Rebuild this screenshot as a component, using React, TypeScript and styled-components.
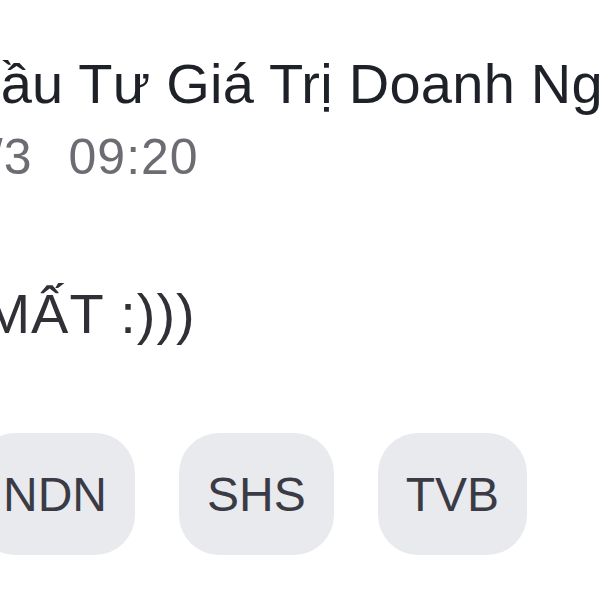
import styled, { createGlobalStyle } from 'styled-components';

const GlobalStyle = createGlobalStyle`
  html, body {
    margin: 0;
    padding: 0;
    background: #ffffff;
  }
`;

// The screenshot is a zoomed crop, so the card is wider than the window
const Viewport = styled.div`
  width: 600px;
  height: 600px;
  overflow: hidden;
  background: #ffffff;
`;

const Card = styled.article`
  display: flex;
  flex-direction: column;
  align-items: flex-start;
  margin-left: -40px;
  padding-top: 49px;
  font-family: 'Liberation Sans', Arial, 'Noto Sans', sans-serif;
  white-space: nowrap;
`;

const Title = styled.h1`
  margin: 0;
  font-size: 56px;
  font-weight: 400;
  line-height: 70px;
  letter-spacing: 0.25px;
  color: #1f2128;
`;

const Meta = styled.div<{ $lead: number }>`
  display: flex;
  gap: 36px;
  margin: 3px 0 0 ${(p) => p.$lead}px;
  font-size: 50px;
  line-height: 70px;
  letter-spacing: 1px;
  color: #6c6c72;
`;

const Body = styled.p<{ $lead: number }>`
  margin: 87px 0 0 ${(p) => p.$lead}px;
  font-size: 56px;
  line-height: 70px;
  letter-spacing: 1px;
  color: #303036;
`;

const TagRow = styled.div<{ $lead: number }>`
  display: flex;
  gap: 44px;
  margin: 84px 0 0 ${(p) => p.$lead}px;
`;

const Tag = styled.span`
  display: flex;
  align-items: center;
  justify-content: center;
  height: 122px;
  padding: 0 28px;
  border-radius: 40px;
  background: #e9eaee;
  color: #3a3b45;
  font-size: 48px;
`;

const tags = ['NDN', 'SHS', 'TVB'];

export default function App() {
  return (
    <>
      <GlobalStyle />
      <Viewport>
        <Card>
          <Title>Đầu Tư Giá Trị Doanh Nghiệp</Title>
          <Meta $lead={0}>
            <span>1/3</span>
            <span>09:20</span>
          </Meta>
          <Body $lead={-103}>BAY MẤT :)))</Body>
          <TagRow $lead={15}>
            {tags.map((t) => (
              <Tag key={t}>{t}</Tag>
            ))}
          </TagRow>
        </Card>
      </Viewport>
    </>
  );
}
